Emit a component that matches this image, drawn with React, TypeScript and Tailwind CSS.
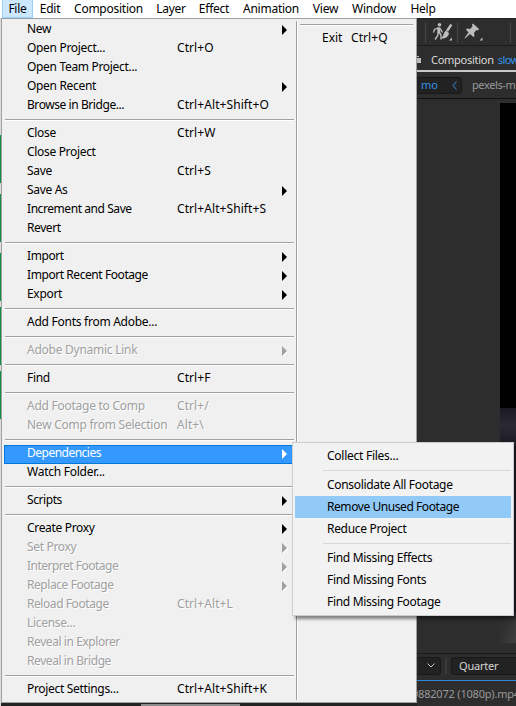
type Item = {
  label: string
  keys?: string
  sub?: boolean
  disabled?: boolean
  active?: boolean
  tracking?: string
}

const tight = 'tracking-[-0.43px]'
const tighter = 'tracking-[-0.51px]'
const loose = 'tracking-[-0.26px]'

const menuBar = [
  { label: 'File', width: 'w-[31px]' },
  { label: 'Edit', width: 'w-[34px]' },
  { label: 'Composition', width: 'w-[83px]' },
  { label: 'Layer', width: 'w-[42px]' },
  { label: 'Effect', width: 'w-[44px]' },
  { label: 'Animation', width: 'w-[70px]' },
  { label: 'View', width: 'w-[39px]' },
  { label: 'Window', width: 'w-[58px]' },
  { label: 'Help', width: 'w-[40px]' },
]

const fileGroups: Item[][] = [
  [
    { label: 'New', sub: true },
    { label: 'Open Project...', keys: 'Ctrl+O' },
    { label: 'Open Team Project...' },
    { label: 'Open Recent', sub: true },
    { label: 'Browse in Bridge...', keys: 'Ctrl+Alt+Shift+O', tracking: tight },
  ],
  [
    { label: 'Close', keys: 'Ctrl+W' },
    { label: 'Close Project' },
    { label: 'Save', keys: 'Ctrl+S' },
    { label: 'Save As', sub: true },
    { label: 'Increment and Save', keys: 'Ctrl+Alt+Shift+S', tracking: tight },
    { label: 'Revert', tracking: tight },
  ],
  [
    { label: 'Import', sub: true, tracking: tight },
    { label: 'Import Recent Footage', sub: true, tracking: tight },
    { label: 'Export', sub: true },
  ],
  [{ label: 'Add Fonts from Adobe...', tracking: loose }],
  [{ label: 'Adobe Dynamic Link', sub: true, disabled: true, tracking: loose }],
  [{ label: 'Find', keys: 'Ctrl+F' }],
  [
    { label: 'Add Footage to Comp', keys: 'Ctrl+/', disabled: true, tracking: loose },
    { label: 'New Comp from Selection', keys: 'Alt+\\', disabled: true, tracking: loose },
  ],
  [
    { label: 'Dependencies', sub: true, active: true, tracking: tighter },
    { label: 'Watch Folder...', tracking: loose },
  ],
  [{ label: 'Scripts', sub: true, tracking: tight }],
  [
    { label: 'Create Proxy', sub: true },
    { label: 'Set Proxy', sub: true, disabled: true },
    { label: 'Interpret Footage', sub: true, disabled: true, tracking: tighter },
    { label: 'Replace Footage', sub: true, disabled: true, tracking: tight },
    { label: 'Reload Footage', keys: 'Ctrl+Alt+L', disabled: true, tracking: tight },
    { label: 'License...', disabled: true },
    { label: 'Reveal in Explorer', disabled: true, tracking: tight },
    { label: 'Reveal in Bridge', disabled: true, tracking: tight },
  ],
  [{ label: 'Project Settings...', keys: 'Ctrl+Alt+Shift+K' }],
]

const dependencyGroups: Item[][] = [
  [{ label: 'Collect Files...', tracking: loose }],
  [
    { label: 'Consolidate All Footage' },
    { label: 'Remove Unused Footage', active: true, tracking: tight },
    { label: 'Reduce Project' },
  ],
  [{ label: 'Find Missing Effects' }, { label: 'Find Missing Fonts' }, { label: 'Find Missing Footage' }],
]

function Arrow({ className }: { className: string }) {
  return (
    <svg viewBox="0 0 5 10" className={`h-[10px] w-[5px] shrink-0 ${className}`}>
      <path d="M0 0 L5 5 L0 10 Z" fill="currentColor" />
    </svg>
  )
}

function MenuRow({ item }: { item: Item }) {
  const color = item.active
    ? 'bg-[#3399ff] text-white outline outline-1 -outline-offset-1 outline-[#0078d7]'
    : item.disabled
      ? 'text-[#a0a0a0] [text-shadow:1px_1px_0_#fff]'
      : 'text-black'
  return (
    <div className={`flex h-[19px] items-center pr-2 pl-[23px] ${color}`}>
      <span className={`-mt-[3px] w-[150px] ${item.tracking ?? 'tracking-[-0.32px]'}`}>{item.label}</span>
      <span className="-mt-[3px] flex-1 tracking-[0.08px]">{item.keys}</span>
      {item.sub && <Arrow className={item.disabled ? '-mt-px drop-shadow-[1px_1px_0_#fff]' : '-mt-px'} />}
    </div>
  )
}

function FileMenu() {
  return (
    <div className="flex h-[685px] w-[416px] border border-[#a0a0a0] bg-[#f0f0f0] py-[2px]">
      <div className="w-[293px] pl-[2px]">
        {fileGroups.map((group, i) => (
          <div key={i}>
            {i > 0 && <div className="mt-[3px] mr-px mb-1 ml-px h-[2px] border-t border-[#a0a0a0] bg-white" />}
            {group.map((item) => (
              <MenuRow key={item.label} item={item} />
            ))}
          </div>
        ))}
      </div>
      <div className="ml-px w-[2px] border-l border-[#a0a0a0] bg-white" />
      <div className="flex-1 pt-[3px] pr-[3px] pl-[2px]">
        <div className="h-[2px] border-t border-[#a0a0a0] bg-white" />
        <div className="mt-[3px] flex pl-[22px]">
          <span className="w-[29px]">Exit</span>
          <span className="tracking-[0.08px]">Ctrl+Q</span>
        </div>
      </div>
    </div>
  )
}

function DependenciesMenu() {
  return (
    <div className="w-[222px] border border-[#ccc] bg-[#f2f2f2] p-[2px] shadow-[3px_3px_3px_rgba(0,0,0,0.45)]">
      {dependencyGroups.map((group, i) => (
        <div key={i}>
          {i > 0 && <div className="my-[3px] ml-[28px] h-px bg-[#d7d7d7]" />}
          {group.map((item) => (
            <div
              key={item.label}
              className={`flex h-[22px] items-center pl-8 text-black ${item.active ? 'bg-[#91c9f7]' : ''}`}
            >
              <span className={item.tracking ?? 'tracking-[-0.31px]'}>{item.label}</span>
            </div>
          ))}
        </div>
      ))}
    </div>
  )
}

function Toolbar() {
  return (
    <div className="flex h-[27px] items-center border-t border-[#222] pl-2">
      <div className="h-[21px] w-px shrink-0 bg-[#454545]" />
      <svg viewBox="0 0 21 20" className="ml-[6px] h-5 w-[21px] shrink-0" fill="none" stroke="#bdbdbd">
        <circle cx="7.5" cy="2.7" r="1.8" fill="#bdbdbd" stroke="none" />
        <path d="M6.8 5.5 V11" strokeWidth="3" />
        <path d="M6.3 10.5 L5.5 14 L3 17.5 M7.3 10.5 L9 13 V17.5" strokeWidth="1.4" />
        <path d="M1.5 10.5 L2.5 7.5 L6 6 L8.5 7 L10.5 10.5" strokeWidth="1.3" />
        <path d="M19.4 2.5 L15 9" strokeWidth="2.4" />
        <path d="M14 8.5 L17 11 C16.5 15 13 17 9 16.5 C11.5 15 11 11 14 8.5 Z" fill="#bdbdbd" stroke="none" />
        <path d="M20 15.5 V18.5 H17 Z" fill="#bdbdbd" stroke="none" />
      </svg>
      <div className="ml-1 h-[21px] w-px shrink-0 bg-[#454545]" />
      <svg viewBox="0 0 20 20" className="ml-[5px] h-5 w-5 shrink-0" fill="#bdbdbd">
        <path d="M10 1.5 L16 7 L15 8.5 L13.5 8 L11 11 L11.5 14 L10.5 15 L7 12 L2 16.5 L1.5 16 L5.5 10.5 L3 7.5 L4 6.5 L7 7 L9.5 4.5 L9 2.5 Z" />
        <path d="M19.5 15.5 V18.5 H16.5 Z" />
      </svg>
      <div className="mr-[5px] ml-auto h-[21px] w-px shrink-0 bg-[#454545]" />
    </div>
  )
}

function Workspace() {
  return (
    <div className="flex h-[688px] w-[99px] flex-col overflow-hidden bg-[#2d2d2d] text-[11px] text-[#d0d0d0]">
      <Toolbar />
      <div className="h-px bg-[#1c1c1c]" />
      <div className="flex h-[24px] items-center pt-[3px]">
        <svg viewBox="0 0 4 7" className="h-[7px] w-1 shrink-0" fill="#bdbdbd">
          <path d="M0 2 H4 V7 H0 Z M0 0 H2 V1 H0 Z" />
        </svg>
        <span className="ml-[10px] tracking-[-0.27px] text-[#dcdcdc]">Composition</span>
        <span className="ml-1 tracking-[-0.6px] text-[#3394e8]">slow</span>
      </div>
      <div className="h-[2px] bg-[#c8c8c8]" />
      <div className="flex h-[27px] items-center border-b border-[#111]">
        <div className="flex h-[17px] w-[45px] shrink-0 items-center justify-between rounded-r-sm border border-l-0 border-[#191919] bg-[#222] pr-1 pl-1 text-[#3394e8]">
          <span>mo</span>
          <svg viewBox="0 0 5 9" className="h-[9px] w-[5px]" fill="none" stroke="currentColor">
            <path d="M4.5 0.5 L1 4.5 L4.5 8.5" />
          </svg>
        </div>
        <span className="ml-[10px] tracking-[-0.4px] text-[#999]">pexels-m</span>
      </div>
      <div className="flex h-[554px] justify-end pt-[4px]">
        <div className="flex w-4 flex-col">
          <div className="h-[305px] bg-black" />
          <div className="h-[34px] bg-linear-to-b from-[#1a1822] via-[#2b2934] to-[#1e1c25]" />
          <div className="h-[170px] bg-[#24222b]" />
          <div className="h-[31px] bg-linear-to-br from-[#2a2a2a] via-[#333] to-[#404040]" />
        </div>
      </div>
      <div className="flex h-[27px] items-center border-t border-[#191919] pb-[3px]">
        <div className="flex h-[18px] w-6 shrink-0 items-center justify-end rounded-r-sm border border-l-0 border-[#191919] bg-[#222] pr-[5px]">
          <svg viewBox="0 0 8 5" className="h-[5px] w-2" fill="none" stroke="#c0c0c0">
            <path d="M0.5 0.5 L4 4 L7.5 0.5" />
          </svg>
        </div>
        <div className="ml-1 h-4 w-[2px] bg-[#3b3b3b]" />
        <div className="ml-1 flex h-[18px] flex-1 items-center rounded-l-sm border border-r-0 border-[#191919] bg-[#222] pl-[7px] tracking-[-0.2px] text-[#d5d5d5]">
          Quarter
        </div>
      </div>
      <div className="h-px shrink-0 bg-[#2f87dc]" />
      <div className="flex flex-1 items-center pt-px text-[#999]">
        <span className="-ml-[5px] tracking-[-0.2px]">9882072 (1080p).mp4</span>
      </div>
    </div>
  )
}

export default function App() {
  return (
    <div className="relative h-[706px] w-[516px] overflow-hidden bg-[#232323] font-['Noto_Sans','Open_Sans',sans-serif] text-[12px] leading-[18px] whitespace-nowrap">
      <div className="flex h-[18px] bg-white pl-[2px] tracking-[-0.25px] text-black">
        {menuBar.map((m, i) => (
          <div
            key={m.label}
            className={`flex items-center justify-center ${m.width} ${i === 0 ? 'border-x border-b border-[#99d1ff] bg-[#cce8ff]' : ''}`}
          >
            {m.label}
          </div>
        ))}
      </div>
      <div className="flex h-[688px]">
        <div className="flex w-px flex-col bg-[#dcdcdc] pt-[117px]">
          <div className="h-12 bg-[#158c46]" />
          <div className="mt-[11px] h-12 bg-[#158c46]" />
          <div className="mt-[11px] h-12 bg-[#158c46]" />
          <div className="mt-[6px] h-[58px] bg-[#158c46]" />
          <div className="mt-[6px] h-12 bg-[#158c46]" />
        </div>
        <div className="flex w-[416px] flex-col">
          <FileMenu />
          <div className="flex h-[3px] pt-px pl-[140px]">
            <div className="w-[99px] bg-[#8c8c8c]" />
          </div>
        </div>
        <Workspace />
      </div>
      <div className="absolute top-[442px] left-[292px]">
        <DependenciesMenu />
      </div>
    </div>
  )
}
